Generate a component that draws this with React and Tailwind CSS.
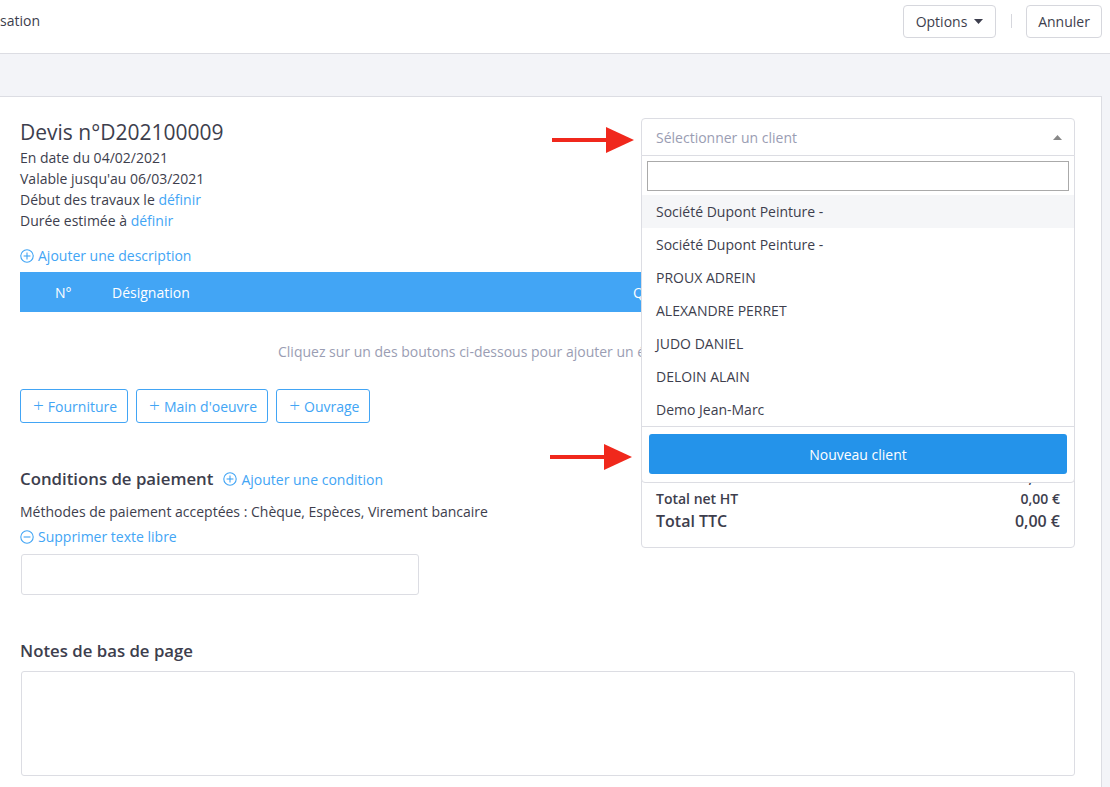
import React from "react";

function CirclePlus({ minus = false }) {
  return (
    <svg width="14" height="14" viewBox="0 0 14 14" className="inline-block shrink-0" fill="none" stroke="#42a5f5" strokeWidth="1.1">
      <circle cx="7" cy="7" r="6.2" />
      {!minus && <line x1="7" y1="3.6" x2="7" y2="10.4" />}
      <line x1="3.6" y1="7" x2="10.4" y2="7" />
    </svg>
  );
}

function Arrow() {
  return (
    <svg width="82" height="28" viewBox="0 0 82 28">
      <rect x="0" y="12" width="58" height="4" fill="#f0281c" />
      <polygon points="54,1 82,14 54,27" fill="#f0281c" />
    </svg>
  );
}

const clients = [
  "Société Dupont Peinture -",
  "Société Dupont Peinture -",
  "PROUX ADREIN",
  "ALEXANDRE PERRET",
  "JUDO DANIEL",
  "DELOIN ALAIN",
  "Demo Jean-Marc",
];

export default function App() {
  return (
    <div
      className="w-[1110px] h-[787px] overflow-hidden bg-[#f3f4f8] text-[#3d3e4d] text-[14px]"
      style={{ fontFamily: '"Open Sans", "Noto Sans", sans-serif' }}
    >
      {/* top bar */}
      <div className="h-[54px] bg-white border-b border-[#dcdde3] flex items-center justify-between pr-[8px]">
        <div className="text-[14px] leading-[20px] -mt-[12px]">sation</div>
        <div className="flex items-center -mt-[11px]">
          <button className="h-[33px] w-[93px] ml-[1px] border border-[#d6d7dd] rounded-[4px] bg-white flex items-center justify-center gap-[7px] text-[14px] text-[#3d3e4d]">
            Options
            <svg width="9" height="5" viewBox="0 0 9 5"><polygon points="0,0 9,0 4.5,5" fill="#3d3e4d" /></svg>
          </button>
          <div className="w-px h-[14px] bg-[#d6d7dd] ml-[15px] mr-[14px]" />
          <button className="h-[33px] w-[76px] border border-[#d6d7dd] rounded-[4px] bg-white text-[14px] text-[#3d3e4d]">
            Annuler
          </button>
        </div>
      </div>

      {/* main */}
      <div className="pt-[42px] pr-[8px]">
        <div className="relative bg-white border-t border-r border-[#dcdde3] h-[700px] pl-[20px] pr-[26px] pt-[20px]">
          {/* header */}
          <div className="flex justify-between items-start">
            <div>
              <div className="text-[21px] leading-[30px]">Devis n°D202100009</div>
              <div className="leading-[21px]">En date du 04/02/2021</div>
              <div className="leading-[21px]">Valable jusqu'au 06/03/2021</div>
              <div className="leading-[21px]">
                Début des travaux le <span className="text-[#42a5f5]">définir</span>
              </div>
              <div className="leading-[21px]">
                Durée estimée à <span className="text-[#42a5f5]">définir</span>
              </div>
              <div className="mt-[14px] leading-[21px] flex items-center gap-[4px] text-[#42a5f5]">
                <CirclePlus /> Ajouter une description
              </div>
            </div>

            {/* select with open dropdown */}
            <div className="relative w-[434px] mt-[1px] z-20">
              <div className="h-[38px] border border-[#dcdde3] rounded-t-[4px] bg-white flex items-center justify-between pl-[14px] pr-[12px]">
                <span className="text-[#9a9db3]">Sélectionner un client</span>
                <svg width="9" height="5" viewBox="0 0 9 5"><polygon points="0,5 9,5 4.5,0" fill="#888" /></svg>
              </div>
              <div className="absolute left-0 right-0 top-[37px] bg-white border border-[#dcdde3] rounded-b-[4px]">
                <div className="px-[5px] pt-[5px] pb-[4px]">
                  <div className="h-[30px] border border-[#aaaaaa]" />
                </div>
                <div>
                  {clients.map((c, i) => (
                    <div
                      key={i}
                      className={`h-[33px] flex items-center pl-[14px] ${i === 0 ? "bg-[#f5f6f8]" : ""}`}
                    >
                      {c}
                    </div>
                  ))}
                </div>
                <div className="border-t border-[#dcdde3] px-[7px] pt-[7px] pb-[8px]">
                  <button className="w-full h-[40px] rounded-[3px] bg-[#2493ea] text-white text-[14px]">
                    Nouveau client
                  </button>
                </div>
              </div>
            </div>
          </div>

          {/* table header */}
          <div className="mt-[6px] h-[40px] bg-[#42a5f5] text-white flex items-center">
            <div className="w-[92px] pl-[35px]">N°</div>
            <div className="flex-1">Désignation</div>
            <div className="w-[150px]">Qté</div>
            <div className="w-[150px]">Prix U. HT</div>
            <div className="w-[142px]">Total HT</div>
          </div>

          <div className="mt-[29px] leading-[21px] text-[#9a9db3] pl-[258px]">
            Cliquez sur un des boutons ci-dessous pour ajouter un élément à votre devis
          </div>

          {/* buttons + totals */}
          <div className="mt-[27px] flex justify-between items-start">
            <div>
              <div className="flex gap-[8px]">
                {["Fourniture", "Main d'oeuvre", "Ouvrage"].map((b) => (
                  <button
                    key={b}
                    className="h-[34px] pl-[12px] pr-[10px] border border-[#42a5f5] rounded-[3px] text-[#42a5f5] text-[14px] flex items-center gap-[4px]"
                  >
                    <span className="text-[19px] leading-none -mt-[2px] font-light">+</span>
                    {b}
                  </button>
                ))}
              </div>
              <div className="mt-[44px] flex items-center gap-[10px]">
                <span className="text-[16.8px] leading-[24px] font-semibold">Conditions de paiement</span>
                <span className="flex items-center gap-[4px] text-[#42a5f5] leading-[21px]">
                  <CirclePlus /> Ajouter une condition
                </span>
              </div>
              <div className="mt-[10px] leading-[21px]">
                Méthodes de paiement acceptées : Chèque, Espèces, Virement bancaire
              </div>
              <div className="mt-[4px] leading-[21px] flex items-center gap-[4px] text-[#42a5f5]">
                <CirclePlus minus /> Supprimer texte libre
              </div>
              <div className="mt-[7px] ml-[1px] w-[398px] h-[41px] border border-[#dcdde3] rounded-[3px]" />
            </div>

            <div className="w-[434px] h-[159px] border border-[#dcdde3] rounded-[4px] flex flex-col justify-end px-[14px] pb-[14px]">
              <div className="flex justify-between font-semibold leading-[20px]">
                <span>Total HT</span>
                <span>0,00 €</span>
              </div>
              <div className="flex justify-between font-semibold leading-[20px]">
                <span>Remise</span>
                <span>0,00 €</span>
              </div>
              <div className="flex justify-between font-semibold leading-[21px]">
                <span>Total net HT</span>
                <span>0,00 €</span>
              </div>
              <div className="flex justify-between font-semibold text-[16px] leading-[24px]">
                <span>Total TTC</span>
                <span>0,00 €</span>
              </div>
            </div>
          </div>

          {/* notes */}
          <div className="mt-[44px] text-[16.8px] leading-[24px] font-semibold">Notes de bas de page</div>
          <div className="mt-[8px] ml-[1px] h-[105px] border border-[#dcdde3] rounded-[3px]" />

          {/* annotation arrows */}
          <div className="absolute left-[552px] top-[29px] z-30">
            <Arrow />
          </div>
          <div className="absolute left-[550px] top-[346px] z-30">
            <Arrow />
          </div>
        </div>
      </div>
    </div>
  );
}
